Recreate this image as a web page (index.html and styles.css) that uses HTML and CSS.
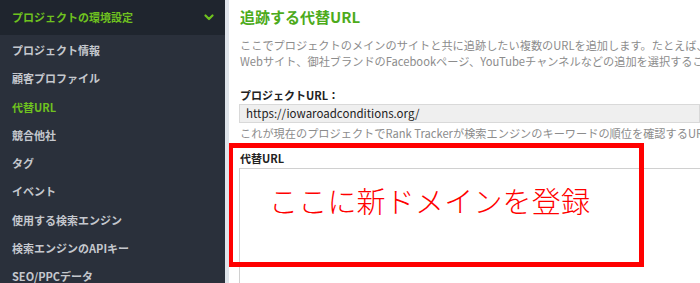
FILE: index.html
```html
<!DOCTYPE html>
<html lang="ja">
<head>
<meta charset="utf-8">
<link rel="stylesheet" href="styles.css">
</head>
<body>
<div class="app">
  <aside class="sidebar">
    <div class="side-head">
      <span>プロジェクトの環境設定</span>
      <svg class="chev" width="10" height="7" viewBox="0 0 10 7"><path d="M1.5 1.5 L5 5 L8.5 1.5" fill="none" stroke="#6fc21f" stroke-width="2.2" stroke-linecap="round" stroke-linejoin="round"/></svg>
    </div>
    <ul class="side-list">
      <li>プロジェクト情報</li>
      <li>顧客プロファイル</li>
      <li class="active">代替URL</li>
      <li>競合他社</li>
      <li>タグ</li>
      <li>イベント</li>
      <li>使用する検索エンジン</li>
      <li>検索エンジンのAPIキー</li>
      <li>SEO/PPCデータ</li>
    </ul>
  </aside>
  <main class="main">
    <h1 class="title">追跡する代替URL</h1>
    <p class="desc">ここでプロジェクトのメインのサイトと共に追跡したい複数のURLを追加します。たとえば、ドメイン以外の<br>Webサイト、御社ブランドのFacebookページ、YouTubeチャンネルなどの追加を選択することができます。</p>
    <div class="label">プロジェクトURL：</div>
    <div class="input">https://iowaroadconditions.org/</div>
    <div class="hint">これが現在のプロジェクトでRank Trackerが検索エンジンのキーワードの順位を確認するURLです。</div>
    <div class="label small">代替URL</div>
    <div class="textarea"></div>
    <div class="annot"><span>ここに新ドメインを登録</span></div>
  </main>
</div>
</body>
</html>
```

FILE: styles.css
```css
* { box-sizing: border-box; }
html, body { margin: 0; padding: 0; }
body {
  width: 700px;
  height: 283px;
  overflow: hidden;
  background: #fff;
  font-family: "Noto Sans CJK JP", "Noto Sans", sans-serif;
}
.app {
  display: flex;
  height: 283px;
}
.sidebar {
  width: 225px;
  flex: none;
  background: #2a303b;
  color: #c5c8ce;
}
.side-head {
  height: 35px;
  background: #1f252e;
  display: flex;
  align-items: center;
  justify-content: space-between;
  padding: 0 11px 2px 12px;
  color: #6fc21f;
  font-weight: 700;
  font-size: 11px;
}
.chev { margin-top: 2px; }
.side-list {
  list-style: none;
  margin: 0;
  padding: 1px 0 0;
}
.side-list li {
  height: 28.3px;
  line-height: 28.3px;
  padding-left: 12px;
  font-size: 11px;
  font-weight: 700;
  white-space: nowrap;
}
.side-list li.active { color: #6fc21f; }
.main {
  position: relative;
  flex: 1;
  min-width: 0;
  border-left: 4px solid #dfe4ea;
  padding: 0 0 0 10px;
  overflow: hidden;
  white-space: nowrap;
}
.title {
  margin: 7px 0 0 1px;
  font-size: 15px;
  line-height: 20px;
  font-weight: 700;
  color: #4dab1b;
}
.desc {
  margin: 10px 0 0 1px;
  font-size: 11.2px;
  line-height: 16px;
  color: #8c8c8c;
}
.label {
  margin: 18px 0 0 1px;
  font-size: 11px;
  line-height: 16px;
  font-weight: 700;
  color: #222;
}
.input {
  margin-top: 1px;
  height: 19px;
  border: 1px solid #d9d9d9;
  background: #efefef;
  padding-left: 6px;
  font-size: 11.5px;
  line-height: 17px;
  color: #222;
}
.hint {
  margin: 2px 0 0 1px;
  font-size: 11.2px;
  line-height: 16px;
  color: #8c8c8c;
}
.label.small {
  margin-top: 9px;
}
.textarea {
  margin-top: 2px;
  height: 120px;
  border-top: 1px solid #d0d0d0;
  border-left: 1px solid #d0d0d0;
}
.annot {
  position: absolute;
  left: -1px;
  top: 143px;
  width: 416px;
  height: 124px;
  border: 5px solid #ff0000;
  display: flex;
  align-items: center;
}
.annot span {
  margin: 0 0 10px 36px;
  font-size: 29px;
  font-weight: 300;
  color: #ff0000;
  letter-spacing: 0.2px;
}
```
